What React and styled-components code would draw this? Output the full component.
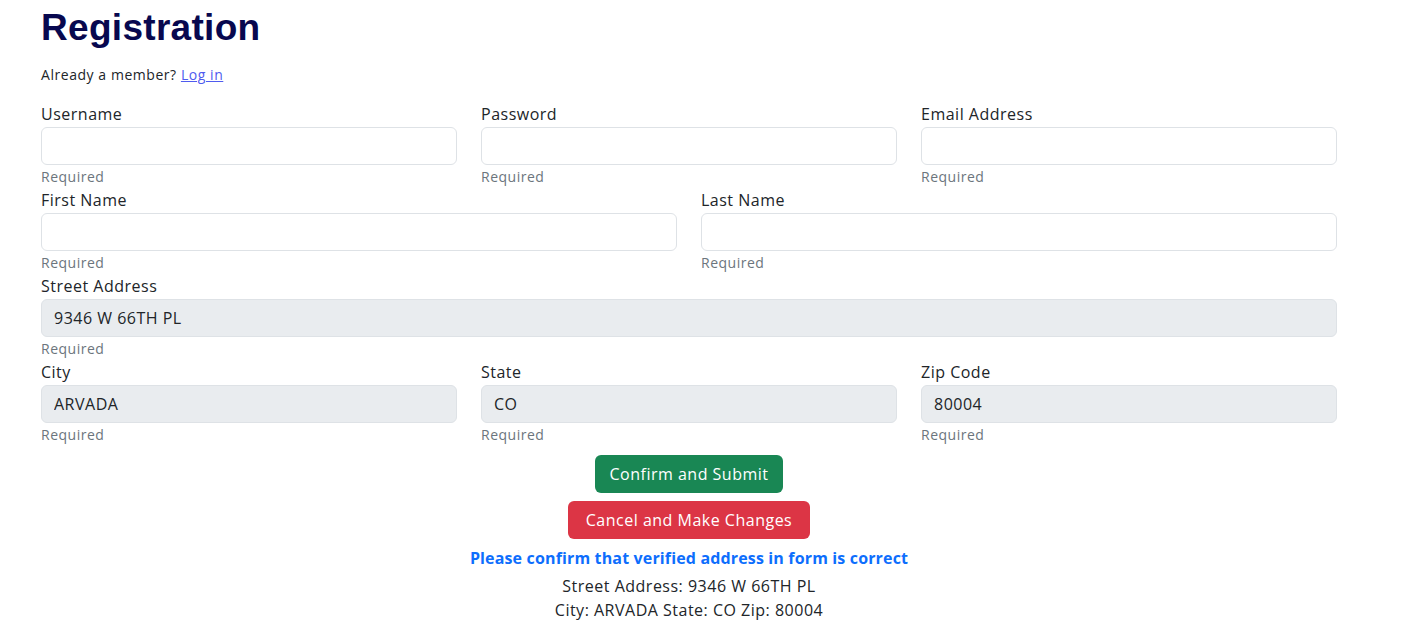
import React from "react";
import styled, { createGlobalStyle } from "styled-components";

const Global = createGlobalStyle`
  html, body { margin: 0; padding: 0; background: #fff; }
  body {
    font-family: "Open Sans", "Noto Sans", sans-serif;
    color: #212529;
    letter-spacing: 0.5px;
  }
  * { box-sizing: border-box; }
`;

const Page = styled.div`
  width: 1296px;
  margin-left: 41px;
  padding-top: 6px;
`;

const Title = styled.h1`
  margin: 0;
  font-family: "Liberation Sans", Arial, sans-serif;
  font-weight: 700;
  font-size: 37px;
  line-height: 44px;
  color: #08084f;
  letter-spacing: 0.3px;
`;

const MemberLine = styled.p`
  margin: 14px 0 0;
  font-size: 14px;
  line-height: 21px;
  color: #212529;
  letter-spacing: 0.55px;
`;

const Link = styled.a`
  color: #4f5bef;
  text-decoration: underline;
`;

const Form = styled.form`
  margin-top: 17px;
  display: flex;
  flex-direction: column;
`;

const Row = styled.div`
  display: grid;
  grid-template-columns: repeat(${(p) => p.$cols}, 1fr);
  column-gap: 24px;
`;

const Field = styled.div`
  display: flex;
  flex-direction: column;
`;

const Label = styled.label`
  font-size: 16px;
  line-height: 25px;
  color: #212529;
`;

const Input = styled.input`
  height: 38px;
  width: 100%;
  border: 1px solid #dee2e6;
  border-radius: 6px;
  padding: 6px 12px;
  font-family: inherit;
  font-size: 16px;
  letter-spacing: 0.5px;
  color: #212529;
  background: ${(p) => (p.disabled ? "#e9ecef" : "#fff")};
  -webkit-text-fill-color: #212529;
  opacity: 1;
`;

const Hint = styled.div`
  margin: 1px 0 1px;
  font-size: 14px;
  line-height: 21px;
  color: #6c757d;
`;

const Actions = styled.div`
  margin-top: 9px;
  display: flex;
  flex-direction: column;
  align-items: center;
  gap: 8px;
`;

const Button = styled.button`
  height: 38px;
  padding: 0 ${(p) => (p.$variant === "danger" ? "17px" : "13px")};
  border: 1px solid transparent;
  border-radius: 6px;
  font-family: inherit;
  font-size: 16px;
  letter-spacing: 0.5px;
  color: #fff;
  background: ${(p) => (p.$variant === "danger" ? "#dc3545" : "#198754")};
  cursor: pointer;
`;

const Notice = styled.div`
  margin-top: 7px;
  text-align: center;
`;

const Emph = styled.div`
  margin-bottom: 4px;
  font-size: 16px;
  line-height: 24px;
  font-weight: 700;
  letter-spacing: 0.15px;
  color: #0d6efd;
`;

const Summary = styled.div`
  font-size: 16px;
  line-height: 24px;
  color: #212529;
`;

function FormField({ label, value }) {
  return (
    <Field>
      <Label>{label}</Label>
      <Input disabled={value !== undefined} defaultValue={value} />
      <Hint>Required</Hint>
    </Field>
  );
}

export default function App() {
  return (
    <>
      <Global />
      <Page>
        <Title>Registration</Title>
        <MemberLine>
          Already a member? <Link href="#">Log in</Link>
        </MemberLine>
        <Form onSubmit={(e) => e.preventDefault()}>
          <Row $cols={3}>
            <FormField label="Username" />
            <FormField label="Password" />
            <FormField label="Email Address" />
          </Row>
          <Row $cols={2}>
            <FormField label="First Name" />
            <FormField label="Last Name" />
          </Row>
          <Row $cols={1}>
            <FormField label="Street Address" value="9346 W 66TH PL" />
          </Row>
          <Row $cols={3}>
            <FormField label="City" value="ARVADA" />
            <FormField label="State" value="CO" />
            <FormField label="Zip Code" value="80004" />
          </Row>
          <Actions>
            <Button type="submit">Confirm and Submit</Button>
            <Button type="button" $variant="danger">
              Cancel and Make Changes
            </Button>
          </Actions>
          <Notice>
            <Emph>Please confirm that verified address in form is correct</Emph>
            <Summary>Street Address: 9346 W 66TH PL</Summary>
            <Summary>City: ARVADA State: CO Zip: 80004</Summary>
          </Notice>
        </Form>
      </Page>
    </>
  );
}
